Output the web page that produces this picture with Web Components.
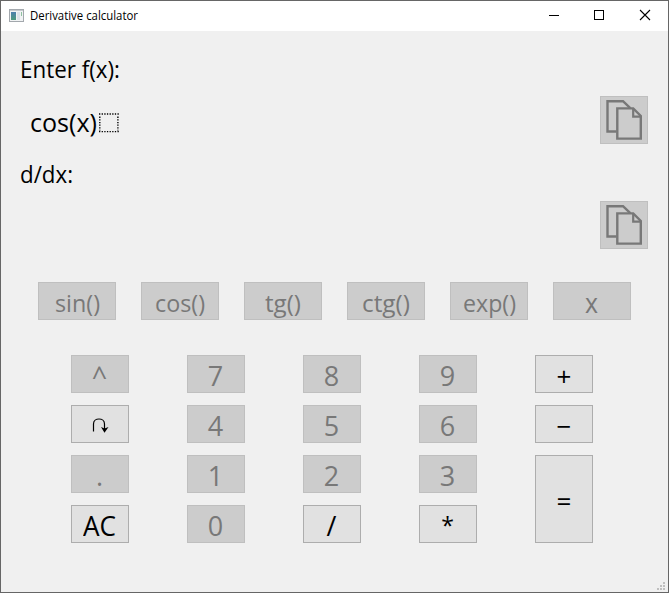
<!DOCTYPE html>
<html lang="en"><head><meta charset="utf-8"><title>Derivative calculator</title>
<style>html,body{margin:0;height:100%;overflow:hidden}</style></head><body>
<calc-window></calc-window>
<script>
const define=(name,html,setup)=>customElements.define(name,class extends HTMLElement{
  connectedCallback(){
    if(this.shadowRoot)return;
    this.attachShadow({mode:'open'}).innerHTML=html;
    if(setup)setup(this,this.shadowRoot);
  }
});

// Label condensed horizontally to its "w" width in pixels.
define('fit-text',`<style>:host{display:flex;flex:none;align-items:center;white-space:pre}span{display:block;flex:none;transform-origin:0 50%}</style><span><slot></slot></span>`,(el,root)=>{
  const s=root.querySelector('span'),w=+el.getAttribute('w');
  if(w){const n=s.getBoundingClientRect().width;el.style.width=w+'px';s.style.transform='scaleX('+w/n+')';}
});

define('calc-key',`<style>
:host{display:flex;box-sizing:border-box;align-items:center;justify-content:center;padding:4px 1px 0 0;background:#e1e1e1;border:1px solid #adadad;color:#000;font-size:27px;line-height:32px}
:host([disabled]){background:#ccc;border-color:#bfbfbf;color:#787878}
:host([fn]){font-size:24px;padding-right:0}
:host([star]){font-size:23px;padding-top:1px}
:host([op]){font-size:26px;padding:3px 0 0}
:host([tall]){grid-row:span 2}
</style><slot></slot>`);

define('copy-button',`<style>
:host{display:block;flex:none;box-sizing:border-box;width:48px;height:48px;background:#ccc;border:1px solid #bfbfbf}svg{display:block}
</style><svg width="46" height="46" viewBox="1 1 46 46" fill="none" stroke="#787878" stroke-width="2.4"><path d="M16.5 35.5H7.5V5.2H23L30.3 12.2"/><path d="M17.3 12.4H33.2L40.8 20V42.6H17.3Z"/><path d="M33.2 12.4V20.6H41" stroke-width="2.2"/></svg>`);

define('title-bar',`<style>
:host{display:flex;height:30px;background:#fff;align-items:center;color:#000;font-size:12px;line-height:30px;padding-left:8px}
.ic{margin-right:6px;margin-top:-2px}.ctl{margin-left:auto;display:flex}.ctl svg{display:block}
</style><svg class="ic" width="15" height="13"><defs><linearGradient id="g" x2="0" y2="1"><stop stop-color="#4d7fae"/><stop offset="1" stop-color="#4d9a7c"/></linearGradient></defs><rect x=".5" y=".5" width="14" height="12" fill="#f1f3f4" stroke="#a3a8ad"/><path d="M1 1.5H14" stroke="#c5c9cd"/><rect x="2" y="3" width="5" height="8" fill="url(#g)"/><rect x="8" y="3" width="3" height="8" fill="#dce2e8"/><rect x="12" y="3" width="1" height="4" fill="#8fc1a0"/></svg><fit-text w="108"><slot></slot></fit-text>
<div class="ctl"><svg width="46" height="30"><path d="M18 14.5H28" stroke="#000"/></svg><svg width="46" height="30"><rect x="17.5" y="9.5" width="9" height="9" fill="none" stroke="#000"/></svg><svg width="45" height="30"><path d="M17 9L27 19M27 9L17 19" stroke="#000" stroke-width="1.1"/></svg></div>`);

// Empty placeholder outlined with evenly spaced dots.
define('input-slot',`<style>:host{display:block;flex:none;width:20px;height:20px}svg{display:block}</style>
<svg width="20" height="20" fill="none" stroke="#000" stroke-width="1.4"><path d="M0 1H20M0 18.6H20" stroke-dasharray="1.3 1.34"/><path d="M.8 3.6V17.5M18.9 3.6V17.5" stroke-dasharray="1.3 1.34"/></svg>`);

define('size-grip',`<style>:host{position:absolute;right:3px;bottom:2px}svg{display:block}</style>
<svg width="8" height="8" fill="#bfbfbf"><path d="M6 0h2v2H6zM3 3h2v2H3zM6 3h2v2H6zM0 6h2v2H0zM3 6h2v2H3zM6 6h2v2H6z"/></svg>`);

define('calc-window',`<style>
:host{position:relative;display:flex;flex-direction:column;box-sizing:border-box;width:669px;height:593px;border:1px solid #666;background:#f0f0f0;font-family:"Open Sans","Noto Sans",sans-serif;color:#000}
.label{height:36px;line-height:36px;font-size:24px;padding-left:19px}
.row{display:flex;align-items:center;padding:0 20px 0 29px;height:48px;font-size:26px;line-height:48px}
.row fit-text{padding-top:3px}
.row copy-button{margin-left:auto}.row input-slot{margin:5px 0 0 2px}
.fns{display:grid;grid-template-columns:repeat(6,78px);gap:25px;grid-auto-rows:38px;margin:33px 0 35px 37px}
.keys{display:grid;grid-template-columns:repeat(5,58px);grid-auto-rows:38px;gap:12px 58px;margin-left:70px}
main{padding-top:20px}
.first{margin-bottom:9px}.second{margin:12px 0 9px}
</style>
<title-bar>Derivative calculator</title-bar>
<main>
<div class="label first"><fit-text w="100">Enter f(x):</fit-text></div>
<div class="row"><fit-text w="67">cos(x)</fit-text><input-slot></input-slot><copy-button></copy-button></div>
<div class="label second"><fit-text w="53">d/dx:</fit-text></div>
<div class="row"><copy-button></copy-button></div>
<div class="fns">
<calc-key fn disabled><fit-text w="45">sin()</fit-text></calc-key><calc-key fn disabled><fit-text w="50">cos()</fit-text></calc-key><calc-key fn disabled><fit-text w="36">tg()</fit-text></calc-key><calc-key fn disabled><fit-text w="48">ctg()</fit-text></calc-key><calc-key fn disabled><fit-text w="53">exp()</fit-text></calc-key><calc-key disabled><fit-text w="13">x</fit-text></calc-key>
</div>
<div class="keys">
<calc-key disabled>^</calc-key><calc-key disabled>7</calc-key><calc-key disabled>8</calc-key><calc-key disabled>9</calc-key><calc-key op>+</calc-key>
<calc-key><svg width="18" height="18" viewBox="0 0 18 18" fill="none" stroke="#000" stroke-width="1.2"><path d="M2.5 14.5V7C2.5 .3 13.5 .3 13.5 7V13"/><path d="M10 10L13.5 11.5L17.5 10L13.5 15.8Z" fill="#000" stroke="none"/></svg></calc-key><calc-key disabled>4</calc-key><calc-key disabled>5</calc-key><calc-key disabled>6</calc-key><calc-key op>−</calc-key>
<calc-key disabled>.</calc-key><calc-key disabled>1</calc-key><calc-key disabled>2</calc-key><calc-key disabled>3</calc-key><calc-key op tall>=</calc-key>
<calc-key><fit-text w="33">AC</fit-text></calc-key><calc-key disabled>0</calc-key><calc-key>/</calc-key><calc-key star>*</calc-key>
</div></main><size-grip></size-grip>`);
</script></body></html>
